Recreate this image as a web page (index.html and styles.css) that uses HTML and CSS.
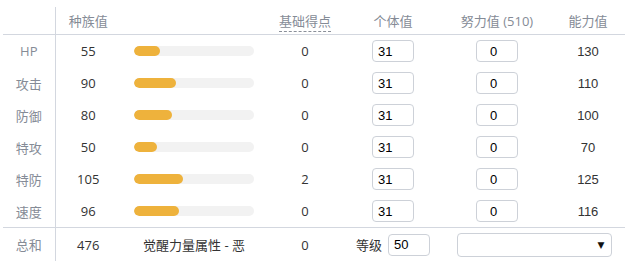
FILE: index.html
```html
<!DOCTYPE html>
<html>
<head>
<meta charset="utf-8">
<link rel="stylesheet" href="styles.css">
</head>
<body>
<table class="stats">
  <colgroup>
    <col class="c-label"><col class="c-base"><col class="c-bar"><col class="c-pt"><col class="c-iv"><col class="c-ev"><col class="c-val">
  </colgroup>
  <thead>
    <tr>
      <th></th>
      <th>种族值</th>
      <th></th>
      <th><span class="dashed">基础得点</span></th>
      <th>个体值</th>
      <th>努力值 (510)</th>
      <th>能力值</th>
    </tr>
  </thead>
  <tbody>
    <tr><td class="lbl">HP</td><td>55</td><td><div class="track"><div class="fill" style="width:26px"></div></div></td><td>0</td><td><input class="num" value="31"></td><td><input class="num ev" value="0"></td><td class="res">130</td></tr>
    <tr><td class="lbl">攻击</td><td>90</td><td><div class="track"><div class="fill" style="width:42px"></div></div></td><td>0</td><td><input class="num" value="31"></td><td><input class="num ev" value="0"></td><td class="res">110</td></tr>
    <tr><td class="lbl">防御</td><td>80</td><td><div class="track"><div class="fill" style="width:38px"></div></div></td><td>0</td><td><input class="num" value="31"></td><td><input class="num ev" value="0"></td><td class="res">100</td></tr>
    <tr><td class="lbl">特攻</td><td>50</td><td><div class="track"><div class="fill" style="width:23px"></div></div></td><td>0</td><td><input class="num" value="31"></td><td><input class="num ev" value="0"></td><td class="res">70</td></tr>
    <tr><td class="lbl">特防</td><td>105</td><td><div class="track"><div class="fill" style="width:49px"></div></div></td><td>2</td><td><input class="num" value="31"></td><td><input class="num ev" value="0"></td><td class="res">125</td></tr>
    <tr><td class="lbl">速度</td><td>96</td><td><div class="track"><div class="fill" style="width:45px"></div></div></td><td>0</td><td><input class="num" value="31"></td><td><input class="num ev" value="0"></td><td class="res">116</td></tr>
  </tbody>
  <tfoot>
    <tr>
      <td class="lbl">总和</td>
      <td>476</td>
      <td>觉醒力量属性 - 恶</td>
      <td>0</td>
      <td><span class="lv">等级</span><input class="num" value="50"></td>
      <td colspan="2"><div class="select"><span class="arrow">▼</span></div></td>
    </tr>
  </tfoot>
</table>
</body>
</html>
```
FILE: styles.css
```css
html, body {
  margin: 0;
  background: #ffffff;
}
body {
  padding: 7px 0 0 3px;
  font-family: "Open Sans", "Noto Sans CJK SC", sans-serif;
  font-size: 13px;
  color: #333333;
}
.stats {
  border-collapse: collapse;
  table-layout: fixed;
  width: 622px;
}
.c-label { width: 52px; }
.c-base { width: 66px; }
.c-bar { width: 146px; }
.c-pt { width: 76px; }
.c-iv { width: 100px; }
.c-ev { width: 108px; }
.c-val { width: 74px; }
.stats th, .stats td {
  padding: 0;
  text-align: center;
  vertical-align: middle;
}
.stats th {
  height: 27px;
  font-weight: normal;
  color: #858b96;
  border-bottom: 1px solid #d3d7df;
  padding-bottom: 0;
}
.stats th:first-child, .stats td:first-child {
  border-right: 1px solid #d3d7df;
}
.stats tbody td {
  height: 32px;
}
.stats tfoot td {
  height: 33px;
  border-top: 1px solid #d3d7df;
}
.stats tfoot td:first-child {
  border-top: 1px solid #d3d7df;
}
.lbl {
  color: #858b96;
}
.dashed {
  border-bottom: 1px dashed #8a8f99;
  padding-bottom: 1px;
}
.track {
  width: 120px;
  height: 10px;
  margin: 0 auto;
  background: #f2f2f2;
  border-radius: 5px;
  overflow: hidden;
}
.fill {
  height: 10px;
  background: #eeb23c;
  border-radius: 5px;
}
.num {
  box-sizing: border-box;
  width: 42px;
  height: 22px;
  margin: 0;
  padding: 0 5px;
  border: 1px solid #cdd1d8;
  border-radius: 4px;
  font-family: "Liberation Sans", Arial, sans-serif;
  font-size: 13px;
  color: #000000;
  background: #ffffff;
  vertical-align: middle;
}
.num.ev {
  padding-left: 13px;
}
.res {
  font-family: "Liberation Sans", Arial, sans-serif;
  font-size: 13px;
}
.lv {
  margin-right: 6px;
  vertical-align: middle;
}
.select {
  box-sizing: border-box;
  width: 155px;
  height: 24px;
  margin: 0 auto;
  border: 1px solid #cdd1d8;
  border-radius: 4px;
  display: flex;
  align-items: center;
  justify-content: flex-end;
  padding-right: 6px;
}
.arrow {
  font-size: 9px;
  color: #111111;
  font-family: "DejaVu Sans", sans-serif;
}
```
